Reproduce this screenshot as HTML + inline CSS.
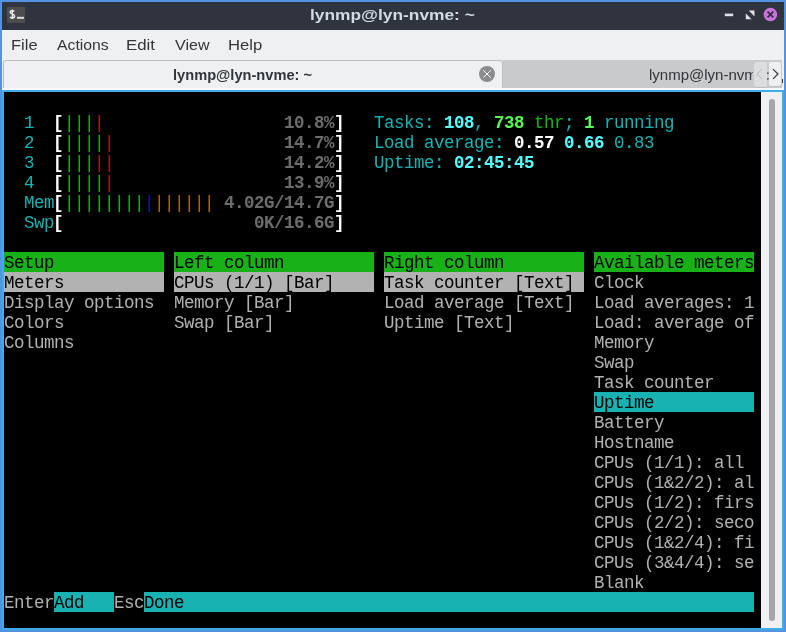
<!DOCTYPE html>
<html><head><meta charset="utf-8">
<style>
*{margin:0;padding:0;box-sizing:border-box}
html,body{width:786px;height:632px;overflow:hidden;background:#5294e2}
body{position:relative;font-family:"Liberation Sans",sans-serif}
.abs{position:absolute}
#title{left:2px;top:2px;width:782px;height:28px;background:#2f343f}
#ttext{left:0;top:0;width:786px;text-align:center;font-weight:bold;font-size:15px;color:#d3dae3;line-height:30px;letter-spacing:1.2px}
#menu{left:2px;top:30px;width:782px;height:60px;background:#eff0f1}
.mi{position:absolute;top:35.3px;font-size:15px;color:#31363b;line-height:20px;transform:scaleX(1.035);transform-origin:0 0}
#frame{left:2px;top:90px;width:782px;height:540px;background:#3daee9}
#term{left:4px;top:92px;width:757px;height:536px;background:#000}
#sb{left:761px;top:92px;width:21px;height:536px;background:#eff0f1}
#handle{left:769px;top:99px;width:6px;height:522px;background:#a5a6a8;border-radius:3px}
.t{position:absolute;height:20px;line-height:20px;font-family:"Liberation Mono",monospace;font-size:17.5px;letter-spacing:-0.5px;white-space:pre;padding-top:1px}
body *{will-change:transform}
</style></head><body>
<div class="abs" id="title"></div>
<div class="abs" style="left:7px;top:7px;width:18px;height:16px;background:#4d4d4d"></div>
<svg class="abs" style="left:4px;top:4px" width="24" height="20" viewBox="0 0 24 20"><path d="M10.3 7.4C9.6 6.9 8.9 6.8 8.2 6.8C6.9 6.8 6.2 7.4 6.2 8.3C6.2 10.2 10.6 9.6 10.6 12.1C10.6 13.2 9.7 13.9 8.3 13.9C7.4 13.9 6.6 13.6 6 13.1" fill="none" stroke="#f0f0f0" stroke-width="1.5"/><path d="M8.3 5.6V15.1" stroke="#f0f0f0" stroke-width="1.3"/><rect x="13" y="12.8" width="7" height="2" fill="#dedede"/></svg>
<div class="abs" style="left:310px;top:0;width:164px;height:30px;line-height:30px;font-weight:bold;font-size:15px;color:#d3dae3;white-space:nowrap"><span style="display:inline-block;transform:scaleX(1.156);transform-origin:0 0">lynmp@lyn-nvme: ~</span></div>
<svg class="abs" style="left:720px;top:8px" width="20" height="14"><rect x="4.8" y="5.6" width="8.4" height="2.6" fill="#dfe3e8"/></svg>
<svg class="abs" style="left:744px;top:9px" width="12" height="12" viewBox="0 0 12 12"><path d="M4.7 1.6H10.5V7.4Z M1.8 4.5V10.3H7.6Z" fill="#dfe3e8"/></svg>
<svg class="abs" style="left:763px;top:7px" width="15" height="15" viewBox="0 0 15 15"><circle cx="7.4" cy="7.5" r="6.8" fill="#c873dc"/><path d="M4.6 4.7L10.2 10.3M10.2 4.7L4.6 10.3" stroke="#2f343f" stroke-width="1.9"/></svg>
<div class="abs" id="menu"></div>
<div class="mi" style="left:11px;transform:scaleX(1.10)">File</div>
<div class="mi" style="left:57px;transform:scaleX(1.05)">Actions</div>
<div class="mi" style="left:126px;transform:scaleX(1.12)">Edit</div>
<div class="mi" style="left:175px;transform:scaleX(1.07)">View</div>
<div class="mi" style="left:228px;transform:scaleX(1.11)">Help</div>
<!-- tabs -->
<div class="abs" style="left:3px;top:60px;width:500px;height:28px;background:#eff0f1;border:1px solid #bcbebf;border-bottom:none;border-radius:3px 3px 0 0"></div>
<div class="abs" style="left:173px;top:61px;font-weight:bold;font-size:14px;color:#31363b;line-height:28px;white-space:nowrap;transform:scaleX(1.045);transform-origin:0 0">lynmp@lyn-nvme: ~</div>
<svg class="abs" style="left:479px;top:66px" width="16" height="16" viewBox="0 0 16 16"><circle cx="8" cy="8" r="8" fill="#8b8c8e"/><path d="M4.2 4.2L11.8 11.8M11.8 4.2L4.2 11.8" stroke="#fff" stroke-width="0.9"/></svg>
<div class="abs" style="left:503px;top:60px;width:279px;height:28px;background:#c9cacc"></div>
<div class="abs" style="left:649px;top:61px;font-size:15px;color:#31363b;line-height:28px;width:104px;overflow:hidden;white-space:nowrap">lynmp@lyn-nvme: ~</div>
<div class="abs" style="left:767px;top:70px;width:2px;height:11px;font-size:13px;line-height:11px;color:#31363b"></div><svg class="abs" style="left:766px;top:62px" width="4" height="24"><rect x="1.3" y="10.4" width="1.2" height="1.6" fill="#31363b"/><rect x="1.3" y="16.2" width="1.2" height="1.6" fill="#31363b"/></svg><div class="abs" style="left:754px;top:62px;width:13px;height:25px;background:#dcdddf;border-radius:2px;box-shadow:0 1px 0 #bdbec0"></div><svg class="abs" style="left:754px;top:62px" width="13" height="24"><path d="M8 7.1L3 12L8 16.9" fill="none" stroke="#b4b5b7" stroke-width="1"/></svg>
<div class="abs" style="left:769px;top:62px;width:12px;height:24px;background:#eff0f1;border-radius:2px;box-shadow:0 1px 0 #bdbec0"></div><svg class="abs" style="left:769px;top:62px" width="12" height="24"><path d="M4 7.1L9 12L4 16.9" fill="none" stroke="#31363b" stroke-width="1.2"/></svg>
<div class="abs" style="left:782px;top:79px;width:1px;height:4px;background:#31363b;border-radius:0 0 1px 1px"></div>
<div class="abs" style="left:2px;top:88px;width:782px;height:2px;background:#fcfcfc"></div>
<div class="abs" id="frame"></div>
<div class="abs" id="term"></div>
<div class="abs" id="sb"></div>
<div class="abs" id="handle"></div>
<div class="t" style="left:24px;top:112px;color:#18b2b2;">1</div>
<div class="t" style="left:53px;top:112px;color:#ffffff;font-weight:bold;">[</div>
<div class="t" style="left:64px;top:112px;color:#18b218;">|</div>
<div class="t" style="left:74px;top:112px;color:#18b218;">|</div>
<div class="t" style="left:84px;top:112px;color:#18b218;">|</div>
<div class="t" style="left:94px;top:112px;color:#b21818;">|</div>
<div class="t" style="left:284px;top:112px;color:#6c6c6c;font-weight:bold;">10.8%</div>
<div class="t" style="left:334px;top:112px;color:#ffffff;font-weight:bold;">]</div>
<div class="t" style="left:24px;top:132px;color:#18b2b2;">2</div>
<div class="t" style="left:53px;top:132px;color:#ffffff;font-weight:bold;">[</div>
<div class="t" style="left:64px;top:132px;color:#18b218;">|</div>
<div class="t" style="left:74px;top:132px;color:#18b218;">|</div>
<div class="t" style="left:84px;top:132px;color:#18b218;">|</div>
<div class="t" style="left:94px;top:132px;color:#18b218;">|</div>
<div class="t" style="left:104px;top:132px;color:#b21818;">|</div>
<div class="t" style="left:284px;top:132px;color:#6c6c6c;font-weight:bold;">14.7%</div>
<div class="t" style="left:334px;top:132px;color:#ffffff;font-weight:bold;">]</div>
<div class="t" style="left:24px;top:152px;color:#18b2b2;">3</div>
<div class="t" style="left:53px;top:152px;color:#ffffff;font-weight:bold;">[</div>
<div class="t" style="left:64px;top:152px;color:#18b218;">|</div>
<div class="t" style="left:74px;top:152px;color:#18b218;">|</div>
<div class="t" style="left:84px;top:152px;color:#18b218;">|</div>
<div class="t" style="left:94px;top:152px;color:#b21818;">|</div>
<div class="t" style="left:104px;top:152px;color:#b21818;">|</div>
<div class="t" style="left:284px;top:152px;color:#6c6c6c;font-weight:bold;">14.2%</div>
<div class="t" style="left:334px;top:152px;color:#ffffff;font-weight:bold;">]</div>
<div class="t" style="left:24px;top:172px;color:#18b2b2;">4</div>
<div class="t" style="left:53px;top:172px;color:#ffffff;font-weight:bold;">[</div>
<div class="t" style="left:64px;top:172px;color:#18b218;">|</div>
<div class="t" style="left:74px;top:172px;color:#18b218;">|</div>
<div class="t" style="left:84px;top:172px;color:#18b218;">|</div>
<div class="t" style="left:94px;top:172px;color:#18b218;">|</div>
<div class="t" style="left:104px;top:172px;color:#b21818;">|</div>
<div class="t" style="left:284px;top:172px;color:#6c6c6c;font-weight:bold;">13.9%</div>
<div class="t" style="left:334px;top:172px;color:#ffffff;font-weight:bold;">]</div>
<div class="t" style="left:24px;top:192px;color:#18b2b2;">Mem</div>
<div class="t" style="left:53px;top:192px;color:#ffffff;font-weight:bold;">[</div>
<div class="t" style="left:64px;top:192px;color:#18b218;">|</div>
<div class="t" style="left:74px;top:192px;color:#18b218;">|</div>
<div class="t" style="left:84px;top:192px;color:#18b218;">|</div>
<div class="t" style="left:94px;top:192px;color:#18b218;">|</div>
<div class="t" style="left:104px;top:192px;color:#18b218;">|</div>
<div class="t" style="left:114px;top:192px;color:#18b218;">|</div>
<div class="t" style="left:124px;top:192px;color:#18b218;">|</div>
<div class="t" style="left:134px;top:192px;color:#18b218;">|</div>
<div class="t" style="left:144px;top:192px;color:#1818b2;">|</div>
<div class="t" style="left:154px;top:192px;color:#b26818;">|</div>
<div class="t" style="left:164px;top:192px;color:#b26818;">|</div>
<div class="t" style="left:174px;top:192px;color:#b26818;">|</div>
<div class="t" style="left:184px;top:192px;color:#b26818;">|</div>
<div class="t" style="left:194px;top:192px;color:#b26818;">|</div>
<div class="t" style="left:204px;top:192px;color:#b26818;">|</div>
<div class="t" style="left:224px;top:192px;color:#6c6c6c;font-weight:bold;">4.02G/14.7G</div>
<div class="t" style="left:334px;top:192px;color:#ffffff;font-weight:bold;">]</div>
<div class="t" style="left:24px;top:212px;color:#18b2b2;">Swp</div>
<div class="t" style="left:53px;top:212px;color:#ffffff;font-weight:bold;">[</div>
<div class="t" style="left:254px;top:212px;color:#6c6c6c;font-weight:bold;">0K/16.6G</div>
<div class="t" style="left:334px;top:212px;color:#ffffff;font-weight:bold;">]</div>
<div class="t" style="left:374px;top:112px;color:#18b2b2;">Tasks: </div>
<div class="t" style="left:444px;top:112px;color:#54ffff;font-weight:bold;">108</div>
<div class="t" style="left:474px;top:112px;color:#18b2b2;">, </div>
<div class="t" style="left:494px;top:112px;color:#54ff54;font-weight:bold;">738</div>
<div class="t" style="left:534px;top:112px;color:#18b218;">thr</div>
<div class="t" style="left:564px;top:112px;color:#18b2b2;">; </div>
<div class="t" style="left:584px;top:112px;color:#54ff54;font-weight:bold;">1</div>
<div class="t" style="left:604px;top:112px;color:#18b2b2;">running</div>
<div class="t" style="left:374px;top:132px;color:#18b2b2;">Load average: </div>
<div class="t" style="left:514px;top:132px;color:#ffffff;font-weight:bold;">0.57 </div>
<div class="t" style="left:564px;top:132px;color:#54ffff;font-weight:bold;">0.66 </div>
<div class="t" style="left:614px;top:132px;color:#18b2b2;">0.83</div>
<div class="t" style="left:374px;top:152px;color:#18b2b2;">Uptime: </div>
<div class="t" style="left:454px;top:152px;color:#54ffff;font-weight:bold;">02:45:45</div>
<div class="t" style="left:4px;top:252px;color:#000000;background:#18b218;width:160px;">Setup           </div>
<div class="t" style="left:174px;top:252px;color:#000000;background:#18b218;width:200px;">Left column         </div>
<div class="t" style="left:384px;top:252px;color:#000000;background:#18b218;width:200px;">Right column        </div>
<div class="t" style="left:594px;top:252px;color:#000000;background:#18b218;width:160px;">Available meters</div>
<div class="t" style="left:4px;top:272px;color:#000000;background:#b2b2b2;width:160px;">Meters          </div>
<div class="t" style="left:174px;top:272px;color:#000000;background:#b2b2b2;width:200px;">CPUs (1/1) [Bar]    </div>
<div class="t" style="left:384px;top:272px;color:#000000;background:#b2b2b2;width:200px;">Task counter [Text] </div>
<div class="t" style="left:594px;top:272px;color:#b2b2b2;">Clock</div>
<div class="t" style="left:4px;top:292px;color:#b2b2b2;">Display options</div>
<div class="t" style="left:174px;top:292px;color:#b2b2b2;">Memory [Bar]</div>
<div class="t" style="left:384px;top:292px;color:#b2b2b2;">Load average [Text]</div>
<div class="t" style="left:594px;top:292px;color:#b2b2b2;">Load averages: 1</div>
<div class="t" style="left:4px;top:312px;color:#b2b2b2;">Colors</div>
<div class="t" style="left:174px;top:312px;color:#b2b2b2;">Swap [Bar]</div>
<div class="t" style="left:384px;top:312px;color:#b2b2b2;">Uptime [Text]</div>
<div class="t" style="left:594px;top:312px;color:#b2b2b2;">Load: average of</div>
<div class="t" style="left:4px;top:332px;color:#b2b2b2;">Columns</div>
<div class="t" style="left:594px;top:332px;color:#b2b2b2;">Memory</div>
<div class="t" style="left:594px;top:352px;color:#b2b2b2;">Swap</div>
<div class="t" style="left:594px;top:372px;color:#b2b2b2;">Task counter</div>
<div class="t" style="left:594px;top:412px;color:#b2b2b2;">Battery</div>
<div class="t" style="left:594px;top:432px;color:#b2b2b2;">Hostname</div>
<div class="t" style="left:594px;top:452px;color:#b2b2b2;">CPUs (1/1): all</div>
<div class="t" style="left:594px;top:472px;color:#b2b2b2;">CPUs (1&amp;2/2): al</div>
<div class="t" style="left:594px;top:492px;color:#b2b2b2;">CPUs (1/2): firs</div>
<div class="t" style="left:594px;top:512px;color:#b2b2b2;">CPUs (2/2): seco</div>
<div class="t" style="left:594px;top:532px;color:#b2b2b2;">CPUs (1&amp;2/4): fi</div>
<div class="t" style="left:594px;top:552px;color:#b2b2b2;">CPUs (3&amp;4/4): se</div>
<div class="t" style="left:594px;top:572px;color:#b2b2b2;">Blank</div>
<div class="t" style="left:594px;top:392px;color:#000000;background:#18b2b2;width:160px;">Uptime          </div>
<div class="t" style="left:4px;top:592px;color:#b2b2b2;">Enter</div>
<div class="t" style="left:54px;top:592px;color:#000000;background:#18b2b2;width:60px;">Add   </div>
<div class="t" style="left:114px;top:592px;color:#b2b2b2;">Esc</div>
<div class="t" style="left:144px;top:592px;color:#000000;background:#18b2b2;width:610px;">Done                                                         </div>
</body></html>
